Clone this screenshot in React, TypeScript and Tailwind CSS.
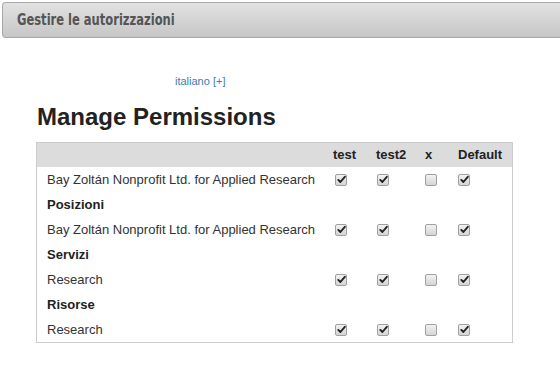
import React from 'react';

type Row = { label: string; group?: boolean; checks?: boolean[] };

const rows: Row[] = [
  { label: 'Bay Zoltán Nonprofit Ltd. for Applied Research', checks: [true, true, false, true] },
  { label: 'Posizioni', group: true },
  { label: 'Bay Zoltán Nonprofit Ltd. for Applied Research', checks: [true, true, false, true] },
  { label: 'Servizi', group: true },
  { label: 'Research', checks: [true, true, false, true] },
  { label: 'Risorse', group: true },
  { label: 'Research', checks: [true, true, false, true] },
];

const cols = ['test', 'test2', 'x', 'Default'];
const colWidths = ['w-[43px]', 'w-[49px]', 'w-[33px]', 'w-[58px]'];
const boxPad = ['pl-[6px]', 'pl-[5px]', 'pl-[4px]', 'pl-[4px]'];

function Check({ checked }: { checked: boolean }) {
  return (
    <span className="inline-flex h-[12px] w-[12px] items-center justify-center rounded-[2px] border border-[#a0a0a0] bg-gradient-to-b from-[#f2f2f2] to-[#d4d4d4]">
      {checked && (
        <svg width="9" height="9" viewBox="0 0 9 9">
          <path d="M1.3 4.9 L3.4 7 L7.8 1.8" fill="none" stroke="#222" strokeWidth="1.9" strokeLinecap="round" strokeLinejoin="round" />
        </svg>
      )}
    </span>
  );
}

export default function App() {
  return (
    <div className="h-[373px] w-[560px] overflow-hidden bg-white font-['Liberation_Sans',Arial,sans-serif] text-[13px] text-[#333]">
      <div className="pl-[2px] pt-[2px]">
        <div className="flex h-[36px] items-center rounded-l-[4px] border border-r-0 border-[#a8a8a8] bg-gradient-to-b from-[#e2e2e2] to-[#c6c6c6] pl-[14px]">
          <span className="inline-block origin-left scale-x-[0.8] whitespace-nowrap font-['DejaVu_Sans_Condensed','DejaVu_Sans',sans-serif] text-[16px] font-bold text-[#555]">
            Gestire le autorizzazioni
          </span>
        </div>
      </div>

      <div className="pl-[175px] pt-[37px] text-[11px] leading-[13px] text-[#3d7cb5]">italiano [+]</div>

      <h1 className="pl-[37px] pt-[15px] text-[24px] leading-[28px] font-bold text-[#222]">Manage Permissions</h1>

      <div className="ml-[36px] mt-[11px] w-[477px] border border-[#cccccc]">
        <div className="flex h-[24px] items-center bg-[#dcdcdc] font-bold text-[#222]">
          <div className="w-[292px]" />
          {cols.map((c, i) => (
            <div key={c} className={`${colWidths[i]} pl-[4px]`}>{c}</div>
          ))}
        </div>
        {rows.map((r, idx) => (
          <div key={idx} className="flex h-[25px] items-center">
            <div className={`w-[292px] pl-[10px] ${r.group ? 'font-bold text-[#222]' : ''}`}>{r.label}</div>
            {r.checks?.map((ch, i) => (
              <div key={i} className={`${colWidths[i]} ${boxPad[i]} flex items-center`}>
                <Check checked={ch} />
              </div>
            ))}
          </div>
        ))}
      </div>
    </div>
  );
}
